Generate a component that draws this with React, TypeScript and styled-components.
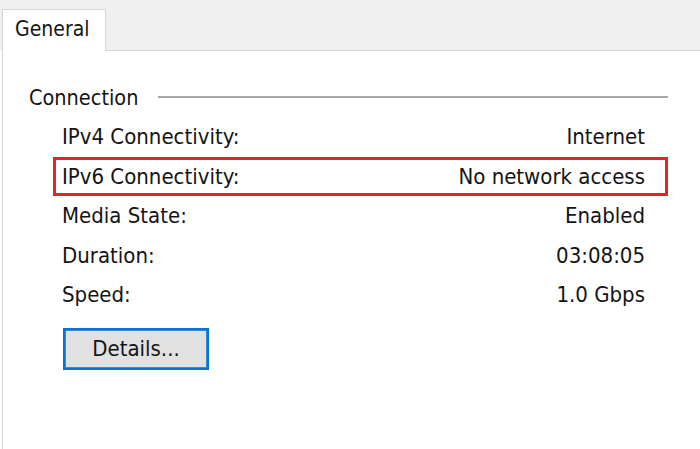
import React from "react";
import styled, { createGlobalStyle } from "styled-components";

const Global = createGlobalStyle`
  html, body { margin: 0; padding: 0; background: #ffffff; }
  body { font-family: "DejaVu Sans Condensed", "DejaVu Sans", sans-serif; color: #141414; }
`;

const Window = styled.div`
  width: 700px;
  height: 449px;
  display: flex;
  flex-direction: column;
  overflow: hidden;
  background: #ffffff;
`;

const TabStrip = styled.div`
  height: 50px;
  flex: none;
  background: #f0f0f0;
  display: flex;
  align-items: flex-end;
  padding-left: 2px;
`;

const Tab = styled.div`
  width: 104px;
  height: 42px;
  box-sizing: border-box;
  background: #ffffff;
  border: 1px solid #d6d6d6;
  border-bottom: none;
  margin-bottom: -1px;
  position: relative;
  z-index: 1;
  display: flex;
  align-items: center;
  padding-left: 12px;
  padding-bottom: 4px;
  font-size: 21px;
`;

const Panel = styled.div`
  flex: 1;
  margin-left: 2px;
  border-top: 1px solid #d6d6d6;
  border-left: 1px solid #d6d6d6;
  padding-top: 35px;
  display: flex;
  flex-direction: column;
`;

const GroupHeader = styled.div`
  display: flex;
  align-items: center;
  height: 22px;
  margin-left: 26px;
  width: 639px;
  gap: 20px;
  font-size: 21.5px;
`;

const GroupLine = styled.div`
  flex: 1;
  height: 2px;
  background: #a8a8a8;
`;

const Rows = styled.div`
  margin-top: 9px;
  margin-left: 50px;
  width: 615px;
  display: flex;
  flex-direction: column;
`;

const Row = styled.div<{ $highlight?: boolean }>`
  height: 39.5px;
  box-sizing: border-box;
  display: flex;
  align-items: center;
  justify-content: space-between;
  padding: 0 20px 0 6px;
  border: 3px solid ${(p) => (p.$highlight ? "#e8222a" : "transparent")};
  font-size: 22px;
`;

const Button = styled.button`
  margin-top: 13px;
  margin-left: 60px;
  width: 146px;
  height: 42px;
  box-sizing: border-box;
  border: 2px solid #0a72d6;
  box-shadow: inset 0 0 0 1px #2f8ae0;
  background: #e1e1e1;
  font-family: inherit;
  font-size: 22px;
  color: #141414;
  padding: 0;
`;

const rows: { label: string; value: string; highlight?: boolean }[] = [
  { label: "IPv4 Connectivity:", value: "Internet" },
  { label: "IPv6 Connectivity:", value: "No network access", highlight: true },
  { label: "Media State:", value: "Enabled" },
  { label: "Duration:", value: "03:08:05" },
  { label: "Speed:", value: "1.0 Gbps" },
];

export default function App() {
  return (
    <>
      <Global />
      <Window>
        <TabStrip>
          <Tab>General</Tab>
        </TabStrip>
        <Panel>
          <GroupHeader>
            <span>Connection</span>
            <GroupLine />
          </GroupHeader>
          <Rows>
            {rows.map((r) => (
              <Row key={r.label} $highlight={r.highlight}>
                <span>{r.label}</span>
                <span>{r.value}</span>
              </Row>
            ))}
          </Rows>
          <Button>Details...</Button>
        </Panel>
      </Window>
    </>
  );
}
